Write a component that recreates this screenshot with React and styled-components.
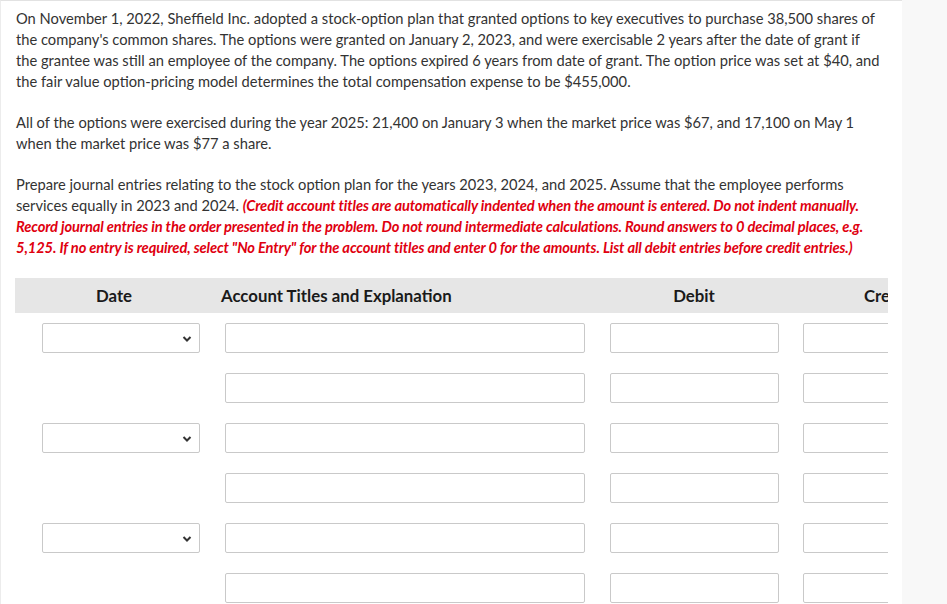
import React from "react";
import styled, { createGlobalStyle } from "styled-components";

const Global = createGlobalStyle`
  html, body { margin: 0; padding: 0; background: #ffffff; }
  body { font-family: Lato, "Open Sans", Arial, sans-serif; }
  * { box-sizing: border-box; }
`;

const Page = styled.div`
  display: flex;
  width: 947px;
  height: 604px;
  overflow: hidden;
`;

const Main = styled.main`
  width: 902px;
  flex: none;
  border-top: 1px solid #e2e2e2;
  border-left: 1px solid #ececec;
  padding: 7px 22px 0 15px;
  background: #fff;
`;

const Side = styled.aside`
  flex: 1;
  background: #f8f8f8;
`;

const Para = styled.p`
  margin: 0 0 20px;
  font-size: 14.7px;
  line-height: 21px;
  color: #333;
`;

const Note = styled.em`
  color: #e0000f;
  font-weight: 700;
  font-style: italic;
  letter-spacing: -0.12px;
`;

const TableClip = styled.div`
  width: 873px;
  margin-left: -1px;
  margin-top: 17px;
  overflow: hidden;
`;

const Table = styled.div`
  width: 980px;
  display: flex;
  flex-direction: column;
  gap: 20px;
`;

const HeaderRow = styled.div`
  display: grid;
  grid-template-columns: 198px 384px 194px 192px;
  height: 35px;
  align-items: center;
  background: #e6e6e6;
  margin-bottom: -10px;
`;

const HeadCell = styled.div`
  font-size: 16.8px;
  font-weight: 700;
  color: #1a1a1a;
  text-align: ${(p) => (p.$left ? "left" : "center")};
  padding-left: ${(p) => (p.$left ? "8px" : "0")};
`;

const Row = styled.div`
  display: grid;
  grid-template-columns: 198px 384px 194px 192px;
  height: 30px;
`;

const Cell = styled.div`
  padding: 0 ${(p) => p.$pr}px 0 ${(p) => p.$pl}px;
`;

const Select = styled.div`
  position: relative;
  height: 30px;
  border: 1px solid #c9c9c9;
  border-radius: 2px;
  background: #fff;
`;

const Chevron = styled.svg`
  position: absolute;
  right: 7px;
  top: 12px;
`;

const Input = styled.div`
  height: 30px;
  border: 1px solid #c9c9c9;
  border-radius: 2px;
  background: #fff;
`;

const rows = [true, false, true, false, true, false];

export default function App() {
  return (
    <>
      <Global />
      <Page>
        <Main>
          <Para>
            On November 1, 2022, Sheffield Inc. adopted a stock-option plan that granted options to key executives to purchase 38,500 shares of the company's common shares. The options were granted on January 2, 2023, and were exercisable 2 years after the date of grant if the grantee was still an employee of the company. The options expired 6 years from date of grant. The option price was set at $40, and the fair value option-pricing model determines the total compensation expense to be $455,000.
          </Para>
          <Para>
            All of the options were exercised during the year 2025: 21,400 on January 3 when the market price was $67, and 17,100 on May 1 when the market price was $77 a share.
          </Para>
          <Para>
            Prepare journal entries relating to the stock option plan for the years 2023, 2024, and 2025. Assume that the employee performs services equally in 2023 and 2024.{" "}
            <Note>
              (Credit account titles are automatically indented when the amount is entered. Do not indent manually. Record journal entries in the order presented in the problem. Do not round intermediate calculations. Round answers to 0 decimal places, e.g. 5,125. If no entry is required, select "No Entry" for the account titles and enter 0 for the amounts. List all debit entries before credit entries.)
            </Note>
          </Para>
          <TableClip>
            <Table>
              <HeaderRow>
                <HeadCell>Date</HeadCell>
                <HeadCell $left>Account Titles and Explanation</HeadCell>
                <HeadCell>Debit</HeadCell>
                <HeadCell>Credit</HeadCell>
              </HeaderRow>
              {rows.map((hasDate, i) => (
                <Row key={i}>
                  <Cell $pl={27} $pr={13}>
                    {hasDate && (
                      <Select>
                        <Chevron width="10" height="6" viewBox="0 0 10 6">
                          <path d="M1.5 1 L5 4.5 L8.5 1" fill="none" stroke="#333" strokeWidth="2" />
                        </Chevron>
                      </Select>
                    )}
                  </Cell>
                  <Cell $pl={12} $pr={12}>
                    <Input />
                  </Cell>
                  <Cell $pl={13} $pr={12}>
                    <Input />
                  </Cell>
                  <Cell $pl={12} $pr={11}>
                    <Input />
                  </Cell>
                </Row>
              ))}
            </Table>
          </TableClip>
        </Main>
        <Side />
      </Page>
    </>
  );
}
